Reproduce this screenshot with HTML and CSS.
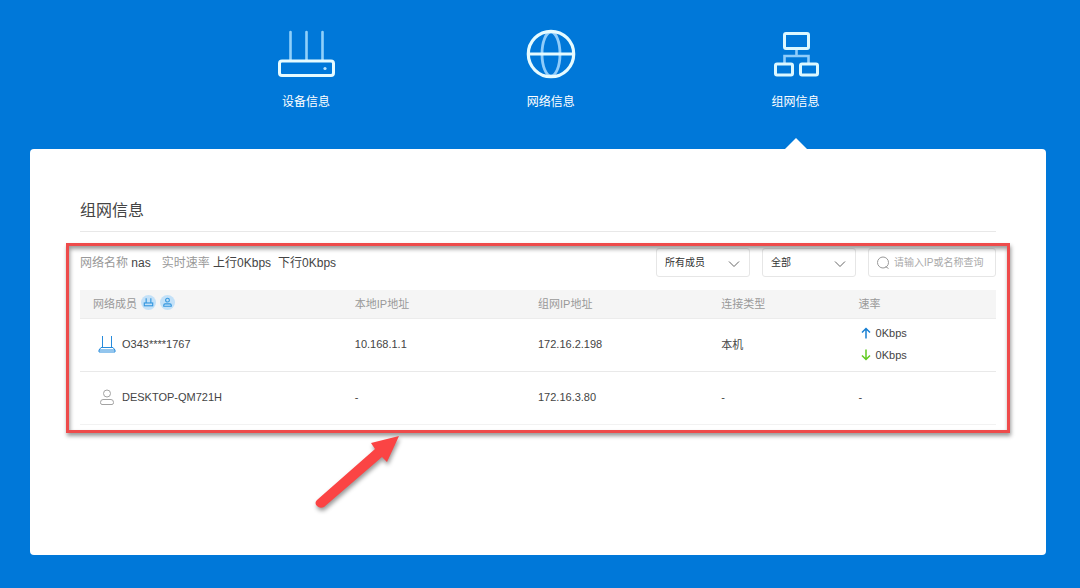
FILE: index.html
```html
<!DOCTYPE html>
<html lang="zh-CN">
<head>
<meta charset="utf-8">
<meta name="viewport" content="width=device-width, initial-scale=1">
<title>组网信息</title>
<link rel="stylesheet" href="styles.css">
</head>
<body>
<nav class="tabs">
  <a class="tab" href="#device">
    <svg class="tab-icon" viewBox="0 0 60 52" fill="none" stroke="#e6fbff">
      <path d="M14.500 4v28M30.500 4v28M46.500 4v28" stroke="#8fd0fa" stroke-width="2.600" stroke-linecap="round"/>
      <rect x="3.500" y="33" width="54" height="14.500" rx="2.500" stroke-width="3"/>
      <circle cx="49" cy="40.500" r="1.600" fill="#b9e4fd" stroke="none"/>
    </svg>
    <span>设备信息</span>
  </a>
  <a class="tab" href="#network">
    <svg class="tab-icon" viewBox="0 0 60 52" fill="none" stroke="#e6fbff">
      <ellipse cx="30" cy="26" rx="9" ry="22" stroke="#8fccfa" stroke-width="2.800"/>
      <path d="M8 26h44" stroke-width="2.800"/>
      <circle cx="30" cy="26" r="22.700" stroke-width="3.200"/>
    </svg>
    <span>网络信息</span>
  </a>
  <a class="tab tab-active" href="#mesh" aria-current="page">
    <svg class="tab-icon" viewBox="0 0 60 52" fill="none" stroke="#dcf8ff">
      <path d="M30.500 20v7M18.500 35v-7h24v7" stroke="#8fccfa" stroke-width="2.600"/>
      <rect x="18.500" y="5.500" width="24" height="15" rx="1.500" stroke-width="3"/>
      <rect x="9.500" y="36" width="17" height="11" rx="1.500" stroke-width="3"/>
      <rect x="34.500" y="36" width="17" height="11" rx="1.500" stroke-width="3"/>
    </svg>
    <span>组网信息</span>
  </a>
</nav>
<main class="panel">
  <h1 class="title">组网信息</h1>
  <section class="members">
    <div class="toolbar">
      <p class="summary">
        <span><span class="muted">网络名称</span> nas</span>
        <span><span class="muted">实时速率</span> 上行0Kbps</span>
        <span class="down">下行0Kbps</span>
      </p>
      <div class="filters">
        <div class="picker">
          <select class="field" aria-label="成员类型"><option>所有成员</option></select>
          <svg class="chevron" viewBox="0 0 12 8" fill="none" stroke="#666"><path d="M1 1.500l5 5 5-5"/></svg>
        </div>
        <div class="picker">
          <select class="field" aria-label="连接状态"><option>全部</option></select>
          <svg class="chevron" viewBox="0 0 12 8" fill="none" stroke="#666"><path d="M1 1.500l5 5 5-5"/></svg>
        </div>
        <div class="search">
          <input class="field" type="text" aria-label="查询" placeholder="请输入IP或名称查询">
          <svg class="lens" viewBox="0 0 14 14" fill="none" stroke="#999"><circle cx="7" cy="6.500" r="5.500"/><path d="M9.500 10.500l3 2"/></svg>
        </div>
      </div>
    </div>
    <table class="table">
      <thead>
        <tr>
          <th class="col-member"><span class="heading">网络成员
            <svg class="badge" viewBox="0 0 16 16" fill="none" stroke="#3597de" stroke-width="1.200"><circle cx="8" cy="8" r="8" fill="#c3e1f8" stroke="none"/><path d="M5.500 3.500v5M10.500 3.500v5"/><rect x="3.500" y="8.500" width="9" height="3"/></svg>
            <svg class="badge" viewBox="0 0 16 16" fill="none" stroke="#3597de" stroke-width="1.200"><circle cx="8" cy="8" r="8" fill="#c3e1f8" stroke="none"/><circle cx="8" cy="5.500" r="2"/><path d="M4 12v-1q0-1.500 1.500-1.500h5q1.500 0 1.500 1.500v1z"/></svg>
          </span></th>
          <th class="col-ip">本地IP地址</th>
          <th class="col-ip">组网IP地址</th>
          <th class="col-type">连接类型</th>
          <th class="col-rate">速率</th>
        </tr>
      </thead>
      <tbody>
        <tr>
          <td><span class="member">
            <svg class="member-icon" viewBox="0 0 20 20" fill="none" stroke="#268bdc"><path d="M5.500 2v11M14.500 2v11M4 13.500h12l2 2.500v2h-16v-2zM2 16h16"/></svg>
            O343****1767</span></td>
          <td>10.168.1.1</td>
          <td>172.16.2.198</td>
          <td>本机</td>
          <td>
            <div class="rates">
              <span class="rate"><svg class="arrow" viewBox="0 0 10 12" fill="none" stroke="#187fd2" stroke-width="1.500"><path d="M5 11.500V2M1 5.500l4-4 4 4"/></svg>0Kbps</span>
              <span class="rate"><svg class="arrow" viewBox="0 0 10 12" fill="none" stroke="#61cb20" stroke-width="1.500"><path d="M5 .5V10M1 6.500l4 4 4-4"/></svg>0Kbps</span>
            </div>
          </td>
        </tr>
        <tr>
          <td><span class="member">
            <svg class="member-icon" viewBox="0 0 20 20" fill="none" stroke="#a3a3a3"><circle cx="10" cy="6.500" r="3.500"/><path d="M6 12.500h8q2.500 0 2.500 3 0 2-1.500 2H5q-1.500 0-1.500-2 0-3 2.500-3z"/></svg>
            DESKTOP-QM721H</span></td>
          <td>-</td>
          <td>172.16.3.80</td>
          <td>-</td>
          <td>-</td>
        </tr>
      </tbody>
    </table>
    <div class="highlight"></div>
    <svg class="pointer" viewBox="0 0 92 80"><path fill="#fb4444" d="M88 4L76 30l-5-5L13 75q-4 2-7-1-3-3 0-6L64 17l-4-6z"/></svg>
  </section>
</main>
</body>
</html>
```
FILE: styles.css
```css
* {
  box-sizing: border-box;
}

body {
  margin: 0;
  min-height: 100vh;
  display: flex;
  flex-direction: column;
  background: #0078d9;
  color: #444;
  font-family: "Liberation Sans", Arial, "Noto Sans CJK SC", sans-serif;
  font-size: 12px;
}

.tabs {
  display: grid;
  grid-template-columns: repeat(3, 1fr);
  padding: 0 15% 0 17%;
}

.tab {
  position: relative;
  display: flex;
  flex-direction: column;
  align-items: center;
  gap: 12px;
  padding: 28px 0 37px;
  color: #fff;
  line-height: 20px;
  text-decoration: none;
}

.tab-icon {
  width: 60px;
  height: 52px;
}

.tab-active::after {
  content: "";
  position: absolute;
  bottom: 0;
  left: 50%;
  margin-left: -11px;
  border: 11px solid transparent;
  border-top: 0;
  border-bottom-color: #fff;
}

.panel {
  flex: 1;
  margin: 0 34px 33px 30px;
  padding: 50px 50px 80px;
  border-radius: 4px;
  background: #fff;
}

.title {
  margin: 0;
  padding-bottom: 8px;
  border-bottom: 1px solid #e8e8e8;
  font-size: 16px;
  font-weight: 400;
  line-height: 24px;
}

.members {
  position: relative;
  padding-top: 16px;
}

.toolbar {
  display: flex;
  align-items: center;
  justify-content: space-between;
  margin-bottom: 13px;
}

.summary {
  display: flex;
  gap: 11px;
  margin: 0;
  line-height: 28px;
}

.down {
  margin-left: -4px;
}

.muted {
  color: #999;
}

.filters {
  display: flex;
  gap: 12px;
}

.picker,
.search {
  position: relative;
  width: 94px;
}

.search {
  width: 128px;
}

.field {
  display: block;
  width: 100%;
  height: 29px;
  padding: 0 8px;
  border: 1px solid #e6e6e6;
  border-radius: 3px;
  background: #fff;
  color: #333;
  font: inherit;
  font-size: 10px;
  appearance: none;
}

.search .field {
  padding: 0 8px 0 25px;
}

.field::placeholder {
  color: #aaa;
}

.chevron {
  position: absolute;
  top: 12px;
  right: 10px;
  width: 12px;
  height: 8px;
  pointer-events: none;
}

.lens {
  position: absolute;
  top: 8px;
  left: 8px;
  width: 14px;
  height: 14px;
}

.table {
  width: 100%;
  table-layout: fixed;
  border-collapse: collapse;
  font-size: 11px;
  text-align: left;
}

.table th {
  height: 28px;
  padding: 0 0 2px;
  border-bottom: 1px solid #ececec;
  background: #f5f5f5;
  color: #999;
  font-weight: 400;
}

.table td {
  height: 53px;
  padding: 0 0 2px;
  border-bottom: 1px solid #e9e9e9;
}

.table tr:last-child td {
  border-bottom-color: #f2f2f2;
}

.col-member {
  width: 30%;
}

.col-ip {
  width: 20%;
}

.col-type,
.col-rate {
  width: 15%;
}

.heading {
  display: flex;
  align-items: center;
  gap: 4px;
  padding-left: 13px;
}

.badge {
  width: 15px;
  height: 15px;
}

.member {
  display: flex;
  align-items: center;
  gap: 5px;
  padding-left: 17px;
}

.member-icon {
  width: 20px;
  height: 20px;
}

.rates {
  display: flex;
  flex-direction: column;
  padding-left: 2px;
}

.rate {
  display: flex;
  align-items: center;
  gap: 5px;
  line-height: 22px;
}

.arrow {
  width: 10px;
  height: 12px;
}

.highlight {
  position: absolute;
  inset: 11px -14px -8px;
  border: 3px solid #ee4b4b;
  box-shadow: 1px 3px 4px rgba(0, 0, 0, 0.4), inset 1px 3px 4px rgba(0, 0, 0, 0.4);
  pointer-events: none;
}

.pointer {
  position: absolute;
  top: 200px;
  left: 231px;
  width: 92px;
  height: 80px;
  overflow: visible;
  filter: drop-shadow(1px 3px 2px rgba(0, 0, 0, 0.4));
  pointer-events: none;
}
```
